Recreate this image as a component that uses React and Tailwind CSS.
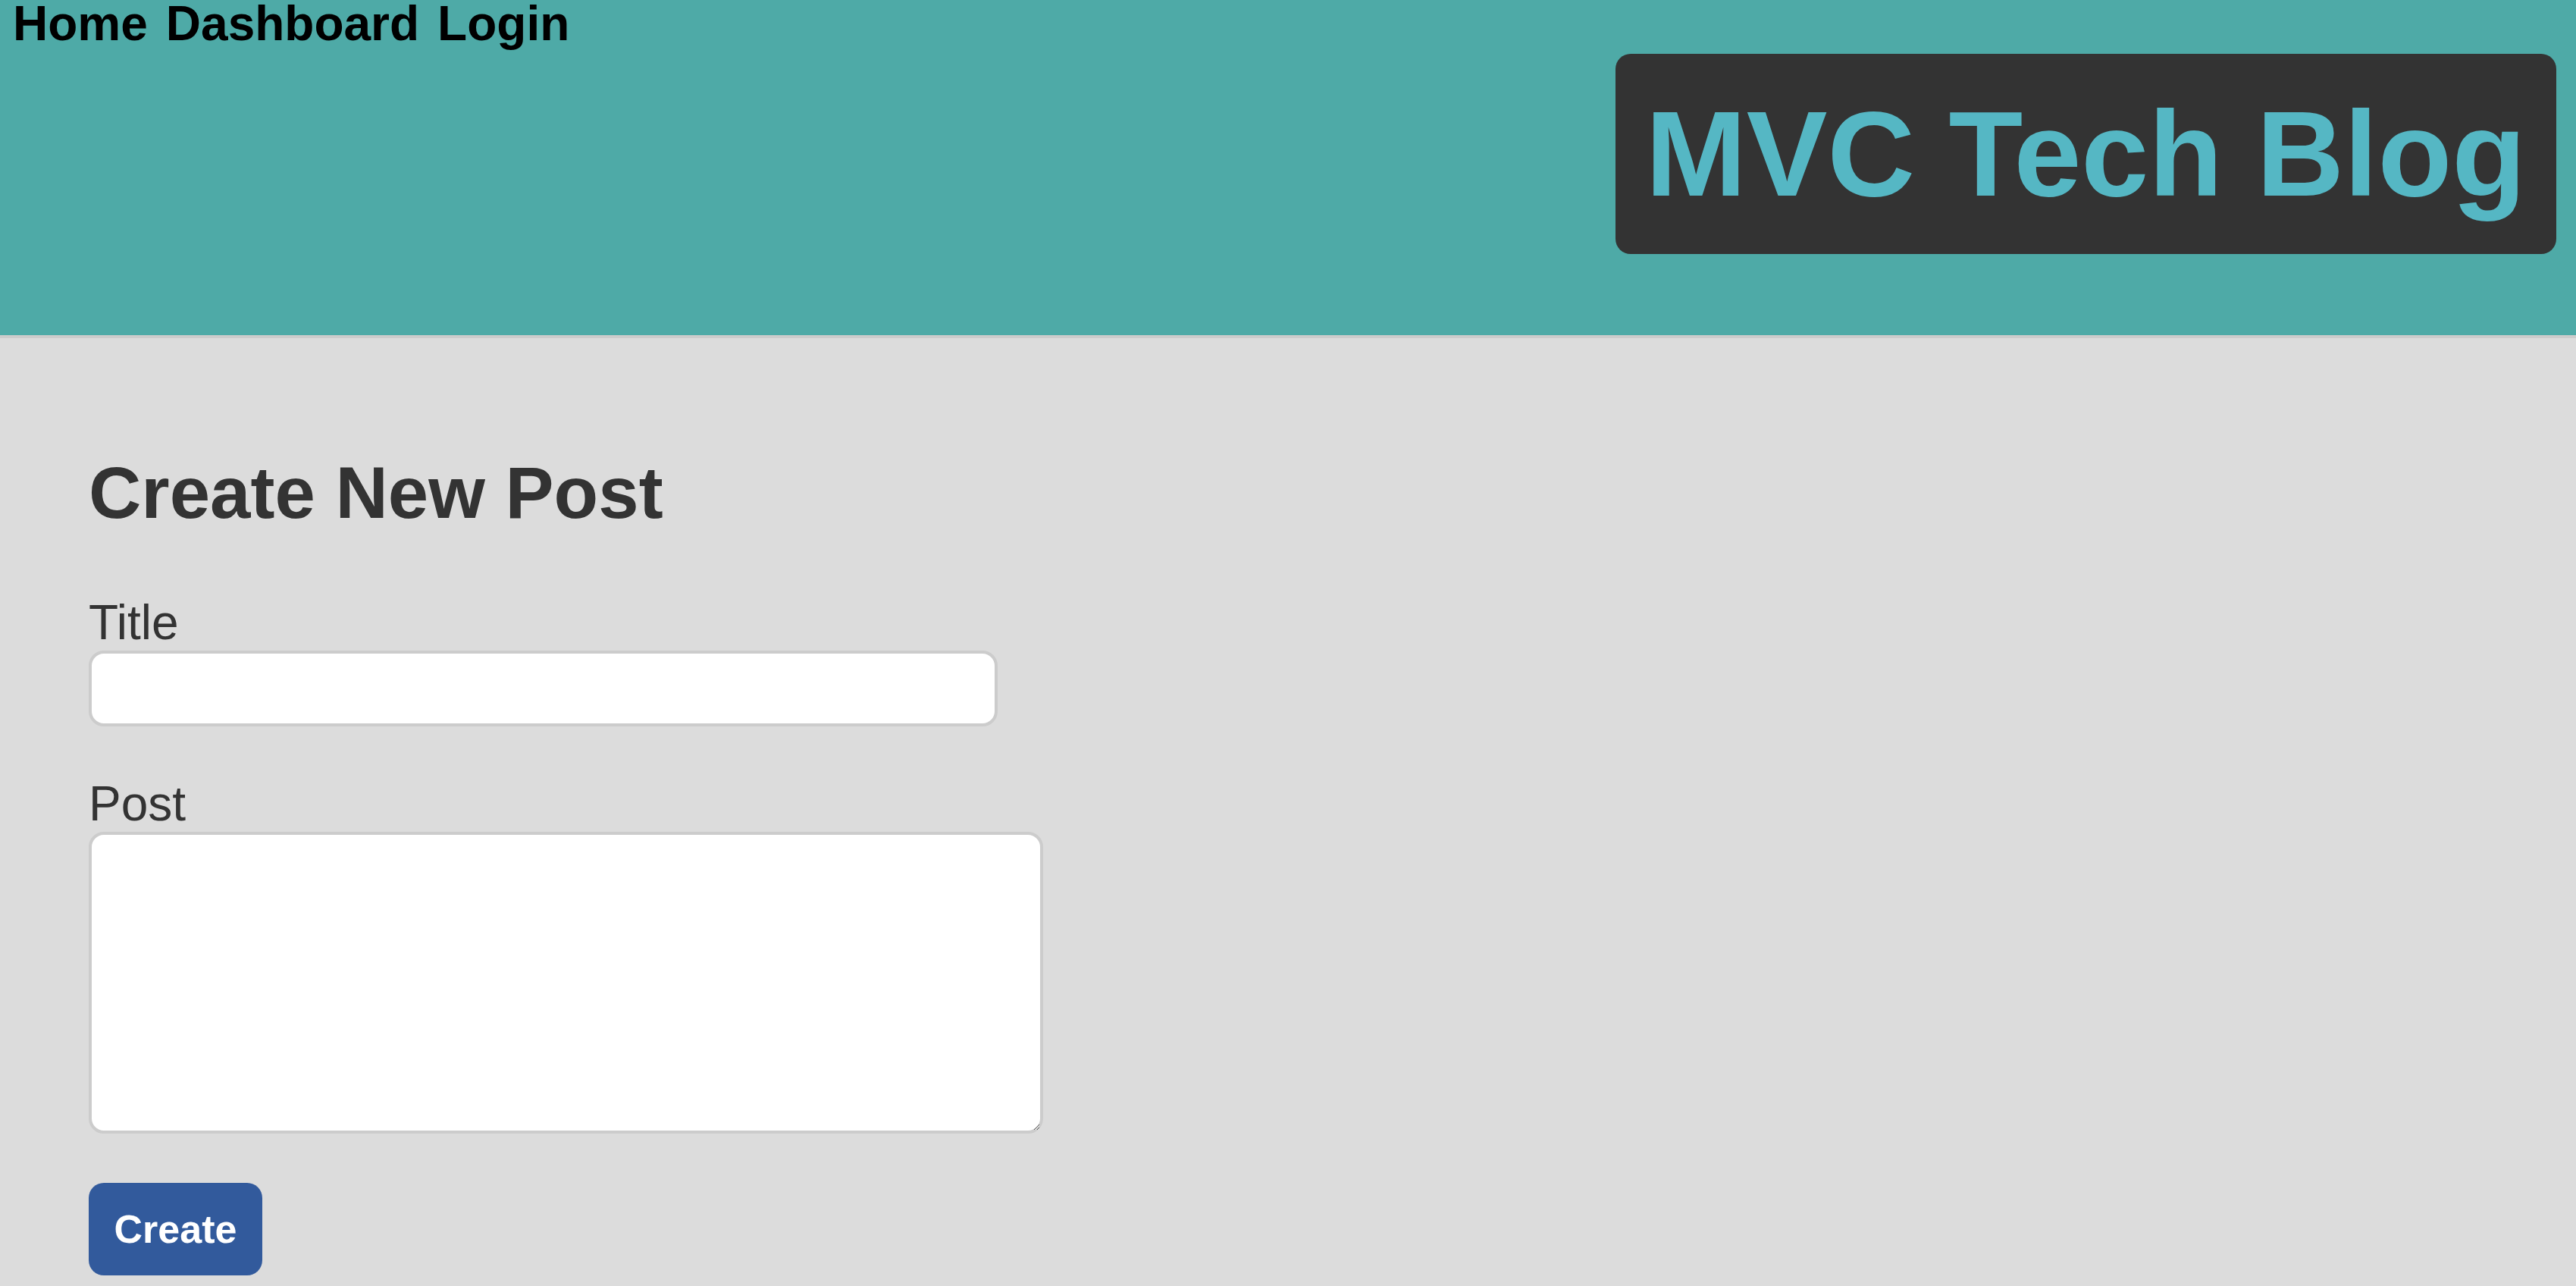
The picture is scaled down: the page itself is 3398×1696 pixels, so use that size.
import React, { useState } from "react";

export default function App() {
  const [title, setTitle] = useState("");
  const [post, setPost] = useState("");

  return (
    <div className="min-h-screen bg-[#dcdcdc] font-['Liberation_Sans',Arial,sans-serif] text-[#333333]">
      <header className="h-[446px] bg-[#4eaaa7] border-b-4 border-[#cccccc] flex flex-col">
        <nav className="flex gap-[24px] pl-[17px] text-[64px] font-bold leading-[62px] text-black">
          <a href="#">Home</a>
          <a href="#">Dashboard</a>
          <a href="#">Login</a>
        </nav>
        <div className="flex justify-end pr-[26px] mt-[9px]">
          <h1 className="bg-[#333333] rounded-[20px] p-[40px] text-[160px] font-bold leading-[184px] text-[#55b7c4]">
            MVC Tech Blog
          </h1>
        </div>
      </header>

      <main className="pl-[117px] pt-[149px]">
        <h2 className="text-[96px] font-bold leading-[110px]">Create New Post</h2>

        <form className="mt-[79px] flex flex-col items-start" onSubmit={(e) => e.preventDefault()}>
          <label htmlFor="title" className="text-[64px] leading-[74px]">
            Title
          </label>
          <input
            id="title"
            value={title}
            onChange={(e) => setTitle(e.target.value)}
            className="w-[1199px] h-[100px] bg-white border-4 border-[#cccccc] rounded-[20px] px-4 text-[40px] outline-none"
          />

          <label htmlFor="post" className="mt-[65px] text-[64px] leading-[74px]">
            Post
          </label>
          <textarea
            id="post"
            value={post}
            onChange={(e) => setPost(e.target.value)}
            className="w-[1259px] h-[398px] bg-white border-4 border-[#cccccc] rounded-[20px] p-4 text-[40px] outline-none"
          />

          <button
            type="submit"
            className="mt-[65px] w-[229px] h-[122px] bg-[#325a9c] rounded-[20px] text-white text-[52px] font-bold leading-[60px]"
          >
            Create
          </button>
        </form>
      </main>
    </div>
  );
}
